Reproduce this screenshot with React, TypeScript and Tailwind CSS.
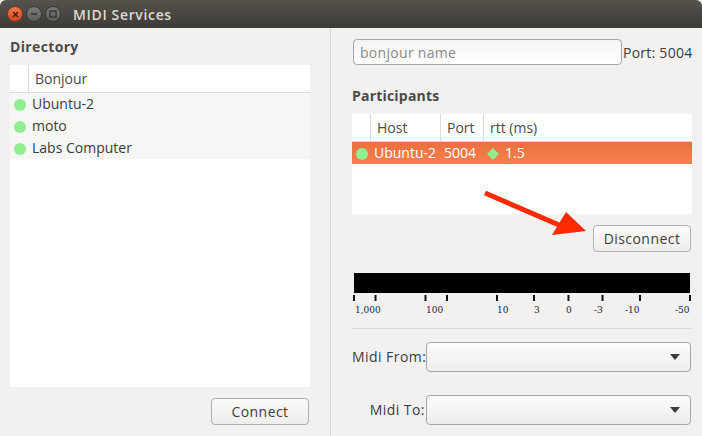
import React from "react";

const ticks = [354, 375.5, 425.5, 447, 497, 534, 568.5, 602.5, 640, 690];
const labels: [string, string][] = [
  ["1,000", "w-[71px]"],
  ["100", "w-[71px]"],
  ["10", "w-[37px]"],
  ["3", "w-[32px]"],
  ["0", "w-[28px]"],
  ["-3", "w-[31px]"],
  ["-10", "w-[50px]"],
  ["-50", "w-[16px]"],
];

function Dot() {
  return <span className="mt-[2px] w-3 h-3 rounded-full bg-[#90ee90] shrink-0" />;
}

function Button({ label }: { label: string }) {
  return (
    <button className="w-[98px] h-[27px] rounded-[4px] border border-[#b2b0ac] bg-gradient-to-b from-[#fbfbfa] to-[#eeedeb] text-[14px] text-[#3c3c3c] tracking-[0.45px] flex items-center justify-center">
      {label}
    </button>
  );
}

function Combo({ label }: { label: string }) {
  return (
    <div className="flex items-center">
      <span className="w-[73px] pb-[2px] text-right text-[14px] text-[#3c3c3c] tracking-[0.45px] whitespace-nowrap">{label}</span>
      <div className="ml-px w-[265px] h-[30px] rounded-[4px] border border-[#a9a7a3] bg-gradient-to-b from-[#fbfbfa] to-[#eeedeb] flex items-center justify-end pr-[10px]">
        <svg width="10" height="6" viewBox="0 0 10 6">
          <path d="M0 0H10L5 6Z" fill="#3c3c3c" />
        </svg>
      </div>
    </div>
  );
}

export default function App() {
  return (
    <div className="w-[702px] h-[436px] relative overflow-hidden bg-[#f2f1f0] font-['Open_Sans','Noto_Sans',sans-serif] flex flex-col">
      {/* Title bar */}
      <div className="h-[28px] shrink-0 rounded-t-[6px] bg-gradient-to-b from-[#56534d] to-[#3d3b37] flex items-center pl-[7px]">
        <span className="w-[16px] h-[16px] rounded-full bg-gradient-to-b from-[#f47a4f] to-[#d9431c] border border-[#7a3a22] flex items-center justify-center">
          <svg width="7" height="7" viewBox="0 0 7 7">
            <path d="M1 1L6 6M6 1L1 6" stroke="#3a1c10" strokeWidth="1.3" />
          </svg>
        </span>
        <span className="ml-[3px] w-[16px] h-[16px] rounded-full bg-gradient-to-b from-[#7d7b76] to-[#5f5d58] border border-[#3a3835] flex items-center justify-center">
          <svg width="8" height="8" viewBox="0 0 8 8">
            <path d="M1 4H7" stroke="#35332f" strokeWidth="1.6" />
          </svg>
        </span>
        <span className="ml-[3px] w-[16px] h-[16px] rounded-full bg-gradient-to-b from-[#7d7b76] to-[#5f5d58] border border-[#3a3835] flex items-center justify-center">
          <svg width="8" height="8" viewBox="0 0 8 8">
            <rect x="1" y="1" width="6" height="6" fill="none" stroke="#35332f" strokeWidth="1.3" />
          </svg>
        </span>
        <span className="ml-[12px] text-[14px] font-semibold text-[#dfdbd2] tracking-[0.65px]">MIDI Services</span>
      </div>

      <div className="flex flex-1 min-h-0">
        {/* Left panel */}
        <div className="w-[331px] shrink-0 border-r border-[#dcdad7] pl-[10px] flex flex-col">
          <div className="h-[37px] flex items-center text-[14px] font-bold text-[#4a4a4a] tracking-[0.35px]">Directory</div>
          <div className="w-[300px] h-[322px] bg-white flex flex-col">
            <div className="h-[28px] flex border-b border-[#dcdad7] text-[14px] text-[#4a4a4a]">
              <div className="w-[19px] border-r border-[#dcdad7]" />
              <div className="pl-[6px] flex items-center">Bonjour</div>
            </div>
            {["Ubuntu-2", "moto", "Labs Computer"].map((n) => (
              <div key={n} className="h-[22px] bg-[#f6f6f5] flex items-center pl-[4px] gap-[6px] text-[14px] text-[#3c3c3c]">
                <Dot />
                <span className="mb-[2px]">{n}</span>
              </div>
            ))}
          </div>
          <div className="w-[299px] flex justify-end mt-[11px]">
            <Button label="Connect" />
          </div>
        </div>

        {/* Right panel */}
        <div className="flex-1 pl-[21px] flex flex-col">
          <div className="flex items-center mt-[11px] h-[26px]">
            <input
              placeholder="bonjour name"
              className="ml-px w-[269px] h-[26px] rounded-[4px] border border-[#a9a7a3] bg-gradient-to-b from-[#f4f4f3] to-white px-[6px] text-[14px] tracking-[0.3px] placeholder:text-[#8a8a8a] outline-none"
            />
            <span className="ml-px text-[14px] text-[#3c3c3c] tracking-[0.25px] whitespace-nowrap">Port: 5004</span>
          </div>
          <div className="h-[49px] flex items-end pb-[8px] text-[14px] font-bold text-[#4a4a4a] tracking-[0.2px]">Participants</div>
          <div className="w-[340px] h-[100px] bg-white flex flex-col">
            <div className="h-[28px] flex border-b border-[#dcdad7] text-[14px] text-[#4a4a4a]">
              <div className="w-[19px] border-r border-[#dcdad7]" />
              <div className="w-[70px] border-r border-[#dcdad7] pl-[6px] flex items-center">Host</div>
              <div className="w-[43px] border-r border-[#dcdad7] pl-[6px] flex items-center">Port</div>
              <div className="pl-[6px] flex items-center">rtt (ms)</div>
            </div>
            <div className="h-[22px] bg-gradient-to-b from-[#ec6f3f] to-[#f5814f] flex items-center text-[14px] text-white">
              <span className="mt-[2px] ml-[4px] w-3 h-3 rounded-full bg-[#90ee90] shrink-0" />
              <span className="mb-[2px] ml-[6px] w-[70px] whitespace-nowrap">Ubuntu-2</span>
              <span className="mb-[2px] w-[43px]">5004</span>
              <svg className="mt-[2px]" width="12" height="12" viewBox="0 0 12 12">
                <path d="M6 0L12 6L6 12L0 6Z" fill="#90ee90" />
              </svg>
              <span className="mb-[2px] ml-[6px]">1.5</span>
            </div>
          </div>
          <div className="w-[339px] flex justify-end mt-[11px]">
            <Button label="Disconnect" />
          </div>
          <div className="ml-[2px] mt-[21px] w-[336px] h-[20px] bg-black shrink-0" />
          <svg className="mt-[2px] shrink-0" width="340" height="6" viewBox="352 0 340 6">
            {ticks.map((x) => (
              <rect key={x} x={x - 1} y="0" width="2" height="6" fill="#111" />
            ))}
          </svg>
          <div className="flex ml-[3px] h-[17px] items-center font-['DejaVu_Serif','Liberation_Serif',serif] text-[9px] text-[#1c2436] pt-[2px]">
            {labels.map(([t, w]) => (
              <span key={t} className={`${w} shrink-0 whitespace-nowrap`}>{t}</span>
            ))}
          </div>
          <div className="mt-[10px] w-[340px] border-t border-[#dcdad7]" />
          <div className="mt-[13px] flex flex-col gap-[23px]">
            <Combo label="Midi From:" />
            <Combo label="Midi To:" />
          </div>
        </div>
      </div>

      {/* Annotation arrow */}
      <svg className="absolute left-[480px] top-[185px]" width="110" height="60" viewBox="480 185 110 60">
        <path d="M485 193L566 228" stroke="#ff2a00" strokeWidth="5" />
        <path d="M586 231L552 235L566 212Z" fill="#ff2a00" />
      </svg>
    </div>
  );
}
